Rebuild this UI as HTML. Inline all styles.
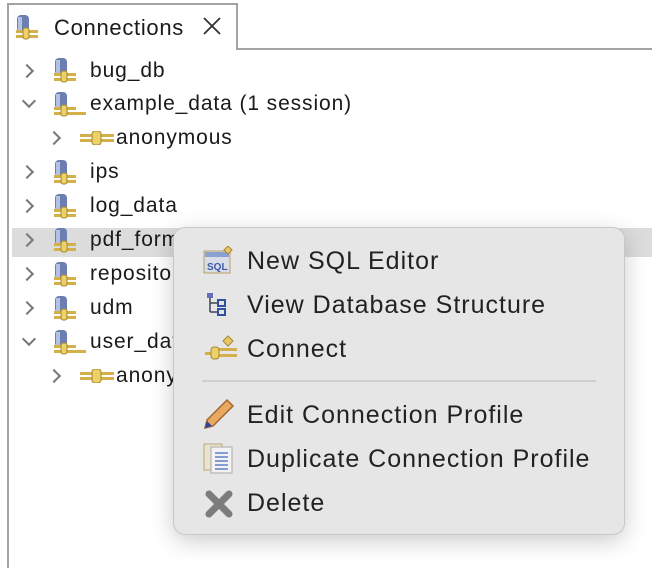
<!DOCTYPE html>
<html><head><style>
body{margin:0;width:652px;height:568px;background:#fff;font-family:"Liberation Sans",Helvetica,Arial,sans-serif;position:relative;overflow:hidden;color:#1a1a1a}
.a{position:absolute}
.row{position:absolute;left:0;height:34px;font-size:21px;letter-spacing:0.9px;line-height:34px;white-space:nowrap}
.chev{position:absolute;width:8px;height:8px;border-right:2px solid #777;border-bottom:2px solid #777}
.mi{position:absolute;left:247px;font-size:25px;letter-spacing:1px;line-height:30px;color:#222;white-space:nowrap}
</style></head><body>
<div class="a" style="left:7px;top:3px;width:2px;height:565px;background:#a3a3a3"></div>
<div class="a" style="left:7px;top:3px;width:230px;height:2px;background:#a3a3a3"></div>
<div class="a" style="left:236px;top:3px;width:2px;height:46px;background:#a3a3a3"></div>
<div class="a" style="left:236px;top:48px;width:416px;height:2px;background:#a3a3a3"></div>
<svg width="0" height="0" style="position:absolute"><defs>
<g id="db"><rect x="3" y="0" width="12" height="17" rx="4" fill="#6d7fb0"/><rect x="4" y="2" width="4" height="14" fill="#b3c1e6"/><rect x="2" y="15" width="22" height="3" fill="#d3b04a"/><rect x="2" y="20" width="22" height="3" fill="#d3b04a"/><rect x="9" y="13" width="6" height="11" rx="2" fill="#ecd06a" stroke="#a8862a"/></g>
<g id="plug"><rect x="0" y="3" width="34" height="3" fill="#d3b04a"/><rect x="0" y="8" width="34" height="3" fill="#d3b04a"/><rect x="12" y="0" width="9" height="14" rx="3" fill="#ecd06a" stroke="#a8862a"/></g>
</defs></svg>
<svg class="a" style="left:14px;top:15px" width="28" height="26"><use href="#db"/></svg>
<div class="a" style="left:54px;top:14px;font-size:22px;letter-spacing:0.7px;line-height:28px">Connections</div>
<svg class="a" style="left:203px;top:17px" width="18" height="18"><path d="M1 1L17 17M17 1L1 17" stroke="#333" stroke-width="1.8"/></svg>

<div class="a" style="left:12px;top:228px;width:640px;height:29px;background:#dcdcdc"></div>

<div class="chev" style="left:22px;top:66px;transform:rotate(-45deg)"></div>
<svg class="a" style="left:52px;top:58px" width="30" height="26"><use href="#db"/></svg>
<div class="row" style="left:90px;top:54px">bug_db</div>

<div class="chev" style="left:24px;top:96px;transform:rotate(45deg)"></div>
<svg class="a" style="left:52px;top:92px" width="40" height="26"><use href="#db"/><rect x="22" y="20" width="12" height="3" fill="#d3b04a"/></svg>
<div class="row" style="left:90px;top:87px">example_data (1 session)</div>

<div class="chev" style="left:49px;top:133px;transform:rotate(-45deg)"></div>
<svg class="a" style="left:80px;top:131px" width="36" height="14"><use href="#plug"/></svg>
<div class="row" style="left:116px;top:121px">anonymous</div>

<div class="chev" style="left:22px;top:167px;transform:rotate(-45deg)"></div>
<svg class="a" style="left:52px;top:160px" width="30" height="26"><use href="#db"/></svg>
<div class="row" style="left:90px;top:155px">ips</div>

<div class="chev" style="left:22px;top:201px;transform:rotate(-45deg)"></div>
<svg class="a" style="left:52px;top:194px" width="30" height="26"><use href="#db"/></svg>
<div class="row" style="left:90px;top:189px">log_data</div>

<div class="chev" style="left:22px;top:235px;transform:rotate(-45deg)"></div>
<svg class="a" style="left:52px;top:228px" width="30" height="26"><use href="#db"/></svg>
<div class="row" style="left:90px;top:223px">pdf_forms</div>

<div class="chev" style="left:22px;top:269px;transform:rotate(-45deg)"></div>
<svg class="a" style="left:52px;top:262px" width="30" height="26"><use href="#db"/></svg>
<div class="row" style="left:90px;top:257px">repository</div>

<div class="chev" style="left:22px;top:303px;transform:rotate(-45deg)"></div>
<svg class="a" style="left:52px;top:296px" width="30" height="26"><use href="#db"/></svg>
<div class="row" style="left:90px;top:291px">udm</div>

<div class="chev" style="left:24px;top:334px;transform:rotate(45deg)"></div>
<svg class="a" style="left:52px;top:330px" width="40" height="26"><use href="#db"/><rect x="22" y="20" width="12" height="3" fill="#d3b04a"/></svg>
<div class="row" style="left:90px;top:325px">user_data</div>

<div class="chev" style="left:49px;top:371px;transform:rotate(-45deg)"></div>
<svg class="a" style="left:80px;top:369px" width="36" height="14"><use href="#plug"/></svg>
<div class="row" style="left:116px;top:359px">anonymous</div>

<div class="a" style="left:174px;top:228px;width:450px;height:306px;background:#e6e6e6;border-radius:11px;box-shadow:0 0 0 1px #c8c8c8,0 6px 24px rgba(0,0,0,0.22)"></div>

<svg class="a" style="left:203px;top:246px" width="32" height="30"><rect x="1" y="5" width="26" height="22" fill="#d8dde8" stroke="#b8a060"/><rect x="2" y="6" width="24" height="5" fill="#8aa0d0"/><text x="4" y="24" font-size="10" font-weight="bold" fill="#3a58a8" font-family="Liberation Sans">SQL</text><path d="M25 0 l4 4 -4 4 -4 -4z" fill="#e8c868" stroke="#a8862a"/></svg>
<div class="mi" style="top:246px">New SQL Editor</div>

<svg class="a" style="left:207px;top:292px" width="24" height="26"><path d="M3 4v16M3 11h8M3 20h8" stroke="#445" stroke-width="1.5" fill="none"/><rect x="0" y="1" width="6" height="5" fill="#6070b8"/><rect x="11" y="8" width="7" height="6" fill="none" stroke="#3050a0" stroke-width="2"/><rect x="11" y="17" width="7" height="6" fill="none" stroke="#3050a0" stroke-width="2"/></svg>
<div class="mi" style="top:290px">View Database Structure</div>

<svg class="a" style="left:205px;top:334px" width="32" height="28"><rect x="0" y="18" width="8" height="3" fill="#d3b04a"/><rect x="10" y="14" width="22" height="3" fill="#d3b04a"/><rect x="10" y="20" width="22" height="3" fill="#d3b04a"/><rect x="6" y="13" width="8" height="12" rx="3" fill="#ecd06a" stroke="#a8862a"/><path d="M23 2 l5 5 -5 5 -5 -5z" fill="#e8c868" stroke="#a8862a"/></svg>
<div class="mi" style="top:334px">Connect</div>

<div class="a" style="left:202px;top:380px;width:394px;height:2px;background:#cfcfcf"></div>

<svg class="a" style="left:203px;top:398px" width="32" height="32"><path d="M24 2 l6 6 -20 20 -8 2 2 -8z" fill="#e8a860" stroke="#a06830" stroke-width="1.5"/><path d="M2 30 l2 -7 5 5z" fill="#3040a0"/></svg>
<div class="mi" style="top:400px">Edit Connection Profile</div>

<svg class="a" style="left:203px;top:442px" width="32" height="32"><rect x="1" y="2" width="18" height="26" fill="#e8e4d0" stroke="#b8a878"/><rect x="8" y="5" width="21" height="26" fill="#f2f2f4" stroke="#a8a8a8"/><path d="M12 11h13M12 15h13M12 19h13M12 23h13M12 27h13" stroke="#6080c8" stroke-width="1.5"/></svg>
<div class="mi" style="top:444px">Duplicate Connection Profile</div>

<svg class="a" style="left:205px;top:490px" width="28" height="28"><path d="M4 4L24 24M24 4L4 24" stroke="#7c7c7c" stroke-width="7" stroke-linecap="round"/></svg>
<div class="mi" style="top:488px">Delete</div>
</body></html>
